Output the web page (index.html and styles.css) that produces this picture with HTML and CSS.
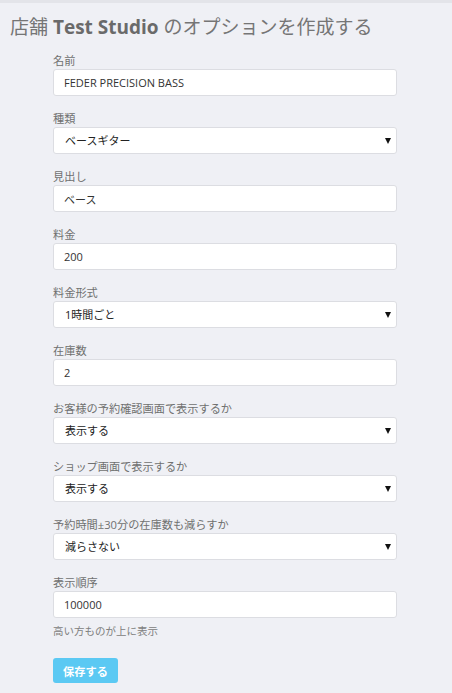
FILE: index.html
```html
<!DOCTYPE html>
<html lang="ja">
<head>
<meta charset="utf-8">
<link rel="stylesheet" href="styles.css">
</head>
<body>
<div class="page">
  <h1 class="title">店舗 <b>Test Studio</b> のオプションを作成する</h1>
  <form class="form">
    <div class="group">
      <label class="label">名前</label>
      <input class="control" type="text" value="FEDER PRECISION BASS">
    </div>
    <div class="group">
      <label class="label">種類</label>
      <div class="select-wrap"><select class="control select"><option>ベースギター</option></select></div>
    </div>
    <div class="group">
      <label class="label">見出し</label>
      <input class="control" type="text" value="ベース">
    </div>
    <div class="group">
      <label class="label">料金</label>
      <input class="control" type="text" value="200">
    </div>
    <div class="group">
      <label class="label">料金形式</label>
      <div class="select-wrap"><select class="control select"><option>1時間ごと</option></select></div>
    </div>
    <div class="group">
      <label class="label">在庫数</label>
      <input class="control" type="text" value="2">
    </div>
    <div class="group">
      <label class="label">お客様の予約確認画面で表示するか</label>
      <div class="select-wrap"><select class="control select"><option>表示する</option></select></div>
    </div>
    <div class="group">
      <label class="label">ショップ画面で表示するか</label>
      <div class="select-wrap"><select class="control select"><option>表示する</option></select></div>
    </div>
    <div class="group">
      <label class="label">予約時間±30分の在庫数も減らすか</label>
      <div class="select-wrap"><select class="control select"><option>減らさない</option></select></div>
    </div>
    <div class="group last">
      <label class="label">表示順序</label>
      <input class="control" type="text" value="100000">
      <p class="help">高い方ものが上に表示</p>
    </div>
    <button class="btn" type="button">保存する</button>
  </form>
</div>
</body>
</html>
```
FILE: styles.css
```css
html, body {
  margin: 0;
  padding: 0;
  background: #eff0f5;
}
body {
  font-family: "Open Sans", "Noto Sans CJK JP", sans-serif;
  color: #333;
}
.page {
  border-top: 3px solid #e3e4e9;
  width: 452px;
  height: 690px;
  box-sizing: border-box;
}
.title {
  margin: 0;
  padding: 10px 0 0 10px;
  font-size: 19px;
  line-height: 28px;
  font-weight: normal;
  color: #757575;
}
.title b {
  font-weight: 700;
  color: #6a6a6a;
}
.form {
  margin: 11px 0 0 53px;
  width: 344px;
}
.group {
  margin-bottom: 14px;
}
.group.last {
  margin-bottom: 19px;
}
.label {
  display: block;
  font-size: 11.2px;
  line-height: 17px;
  color: #707070;
}
.control {
  display: block;
  box-sizing: border-box;
  width: 344px;
  height: 27px;
  margin: 0;
  padding: 0 10px;
  border: 1px solid #dcdde2;
  border-radius: 3px;
  background: #fff;
  font-family: "Open Sans", "Noto Sans CJK JP", sans-serif;
  font-size: 11px;
  color: #333;
  outline: none;
}
.select-wrap {
  position: relative;
}
.select {
  -webkit-appearance: none;
  appearance: none;
  padding-left: 11px;
  color: #222;
}
.select-wrap::after {
  content: "";
  position: absolute;
  right: 6px;
  top: 11px;
  width: 0;
  height: 0;
  border-left: 3px solid transparent;
  border-right: 3px solid transparent;
  border-top: 6px solid #111;
  pointer-events: none;
}
.help {
  margin: 5px 0 0;
  font-size: 10.5px;
  line-height: 16px;
  color: #808080;
}
.btn {
  display: block;
  width: 65px;
  height: 25px;
  padding: 0;
  border: none;
  border-radius: 3px;
  background: #5bc9f3;
  color: #fff;
  font-family: "Open Sans", "Noto Sans CJK JP", sans-serif;
  font-size: 11.2px;
  font-weight: 700;
}
```
